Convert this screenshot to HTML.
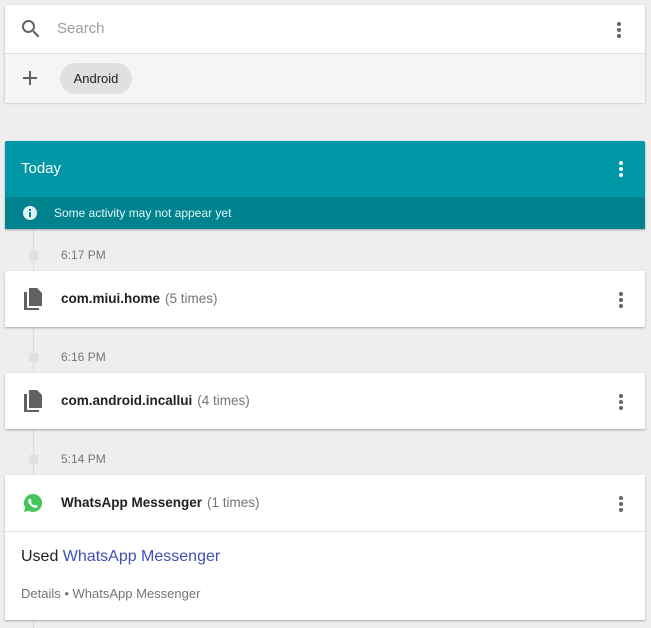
<!DOCTYPE html>
<html><head><style>
body{margin:0;width:651px;height:628px;background:#eeeeee;font-family:"Liberation Sans",Arial,sans-serif;position:relative;overflow:hidden}
.a{position:absolute}
.card{position:absolute;left:5px;width:640px;background:#fff;box-shadow:0 1px 2px rgba(0,0,0,.3)}
.dots{position:absolute;width:4px}
.dots i{display:block;width:4px;height:4px;border-radius:50%;background:#666;margin-bottom:2px}
.time{position:absolute;left:61px;font-size:12px;color:#757575}
.sq{position:absolute;left:29px;width:9px;height:9px;background:#e0e0e0}
.title{position:absolute;left:56px;font-size:13.5px;font-weight:bold;color:#212121}
.title span{font-weight:normal;color:#757575;margin-left:5px}
</style></head><body>
<div class="a" style="left:33px;top:229px;width:1px;height:399px;background:#dcdcdc"></div>

<div class="card" style="top:5px;height:97px">
  <svg class="a" style="left:14px;top:12px" width="24" height="24" viewBox="0 0 24 24"><path fill="#616161" d="M15.5 14h-.79l-.28-.27A6.47 6.47 0 0016 9.5 6.5 6.5 0 109.5 16c1.61 0 3.09-.59 4.23-1.57l.27.28v.79l5 4.99L20.49 19l-4.99-5zm-6 0C7.01 14 5 11.99 5 9.5S7.01 5 9.5 5 14 7.01 14 9.5 11.99 14 9.5 14z"/></svg>
  <div class="a" style="left:52px;top:15px;font-size:15px;color:#9e9e9e">Search</div>
  <div class="dots" style="left:612px;top:17px"><i></i><i></i><i></i></div>
  <div class="a" style="left:0;top:48px;width:640px;height:49px;background:#f5f5f5;border-top:1px solid #e0e0e0"></div>
  <div class="a" style="left:18px;top:72px;width:14px;height:2px;background:#616161"></div>
  <div class="a" style="left:24px;top:66px;width:2px;height:14px;background:#616161"></div>
  <div class="a" style="left:55px;top:58px;width:72px;height:31px;border-radius:16px;background:#e0e0e0;font-size:13px;color:#212121;text-align:center;line-height:31px">Android</div>
</div>

<div class="card" style="top:141px;height:88px;background:#0097a7;border-radius:2px">
  <div class="a" style="left:16px;top:19px;font-size:15px;color:#fff">Today</div>
  <div class="dots" style="left:614px;top:20px"><i style="background:#fff"></i><i style="background:#fff"></i><i style="background:#fff"></i></div>
  <div class="a" style="left:0;top:56px;width:640px;height:32px;background:#00838f">
    <div class="a" style="left:18px;top:9px;width:14px;height:14px;border-radius:50%;background:#e0f2f1"></div>
    <div class="a" style="left:24px;top:12px;width:2px;height:2px;background:#00838f"></div>
    <div class="a" style="left:24px;top:15px;width:2px;height:5px;background:#00838f"></div>
    <div class="a" style="left:49px;top:9px;font-size:12px;color:#e0f7fa">Some activity may not appear yet</div>
  </div>
</div>

<div class="sq" style="top:251px"></div><div class="time" style="top:248px">6:17 PM</div>
<div class="card" style="top:271px;height:56px">
  <svg class="a" style="left:18px;top:17px" width="20" height="22" viewBox="0 0 20 22"><path fill="#616161" d="M6 0h8l5 5v13H6z"/><path fill="#616161" d="M1 4h3v16h12v2H1z"/></svg>
  <div class="title" style="top:20px">com.miui.home<span>(5 times)</span></div>
  <div class="dots" style="left:614px;top:21px"><i></i><i></i><i></i></div>
</div>

<div class="sq" style="top:353px"></div><div class="time" style="top:350px">6:16 PM</div>
<div class="card" style="top:373px;height:56px">
  <svg class="a" style="left:18px;top:17px" width="20" height="22" viewBox="0 0 20 22"><path fill="#616161" d="M6 0h8l5 5v13H6z"/><path fill="#616161" d="M1 4h3v16h12v2H1z"/></svg>
  <div class="title" style="top:20px">com.android.incallui<span>(4 times)</span></div>
  <div class="dots" style="left:614px;top:21px"><i></i><i></i><i></i></div>
</div>

<div class="sq" style="top:455px"></div><div class="time" style="top:452px">5:14 PM</div>
<div class="card" style="top:475px;height:145px">
  <svg class="a" style="left:18px;top:18px" width="20" height="20" viewBox="0 0 20 20"><path fill="#43c55a" d="M10 1a9 9 0 00-7.8 13.5L1 19l4.6-1.2A9 9 0 1010 1z"/><path fill="#fff" d="M7 5.5c.4 0 .6.1.8.6l.8 1.8c.1.3 0 .6-.3.9l-.4.5c.7 1.4 1.8 2.5 3.2 3.2l.5-.5c.3-.3.6-.3.9-.2l1.8.8c.4.2.4.5.3.9-.3.9-1.1 1.5-2 1.4C9.5 15 5.5 11 5.1 8c-.1-1.2.7-2.3 1.9-2.5z"/></svg>
  <div class="title" style="top:20px">WhatsApp Messenger<span>(1 times)</span></div>
  <div class="dots" style="left:614px;top:21px"><i></i><i></i><i></i></div>
  <div class="a" style="left:0;top:56px;width:640px;height:1px;background:#e0e0e0"></div>
  <div class="a" style="left:16px;top:73px;font-size:16px;color:#212121">Used <span style="color:#3f51b5">WhatsApp Messenger</span></div>
  <div class="a" style="left:16px;top:111px;font-size:13px;color:#757575">Details • WhatsApp Messenger</div>
</div>
</body></html>
